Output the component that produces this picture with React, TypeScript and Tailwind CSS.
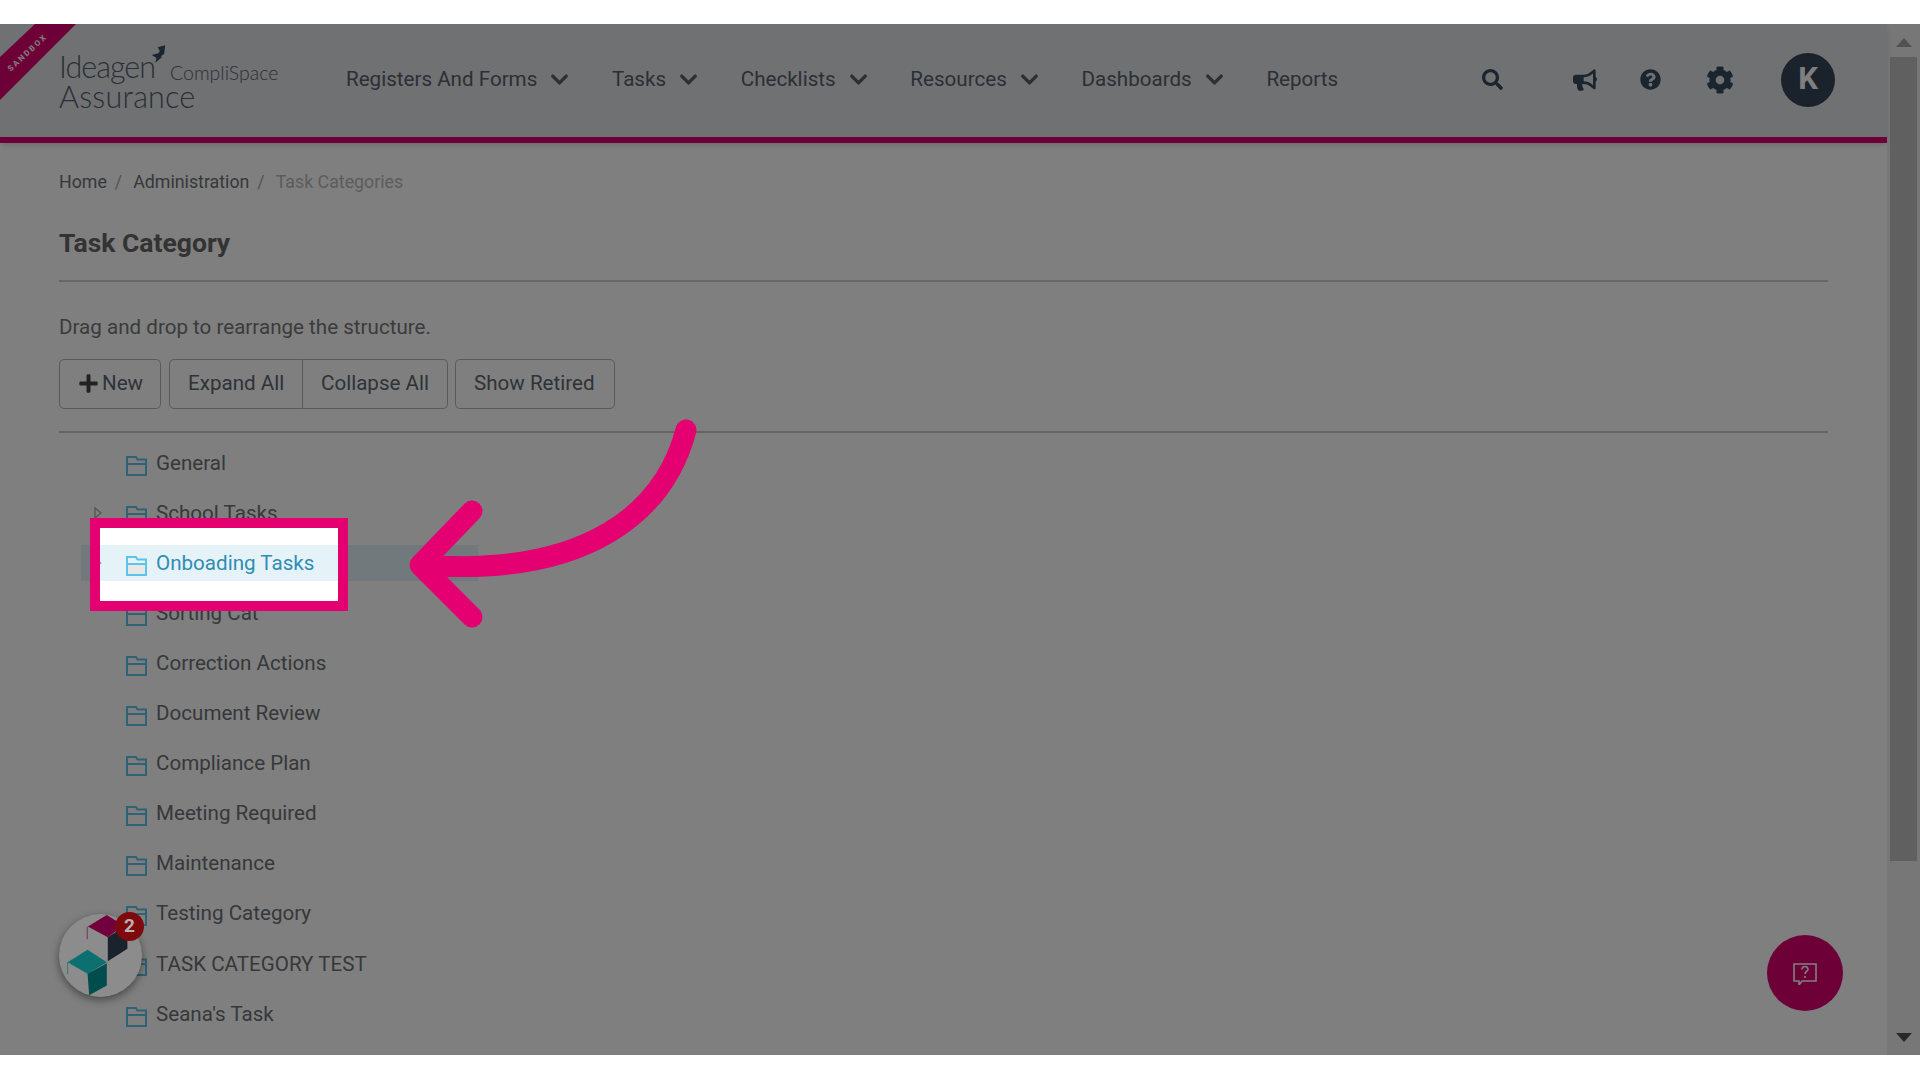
import { ChevronDown } from 'lucide-react';
import { FaBullhorn, FaCog, FaPlus, FaQuestionCircle, FaSearch } from 'react-icons/fa';

const NAV_ITEMS = ['Registers And Forms', 'Tasks', 'Checklists', 'Resources', 'Dashboards'];

const CATEGORIES = [
  'General',
  'School Tasks',
  'Onboading Tasks',
  'Sorting Cat',
  'Correction Actions',
  'Document Review',
  'Compliance Plan',
  'Meeting Required',
  'Maintenance',
  'Testing Category',
  'TASK CATEGORY TEST',
  "Seana's Task",
];

function FolderIcon({ selected }: { selected?: boolean }) {
  return (
    <svg width="21" height="20" viewBox="0 0 21 20" fill="none" className="shrink-0 mt-[5px]">
      {selected && <rect x="1" y="8" width="19" height="11" fill="#e8e8e8" />}
      <path d="M1 1h9l1.5 2.5H20V19H1zM1 8h19" stroke="#5cc4e8" strokeWidth="2" />
    </svg>
  );
}

function Expander() {
  return (
    <svg width="8" height="12" viewBox="0 0 8 12" fill="none">
      <path d="M1 1l6 5-6 5z" stroke="#a9a9a9" strokeWidth="1.3" />
    </svg>
  );
}

function Logo() {
  return (
    <div className="w-[287px] shrink-0 mt-[4px] text-[#55606c] font-['Lato',sans-serif] font-light">
      <div className="relative flex items-baseline leading-[29px]">
        <span className="text-[30.5px] tracking-[-1px]">Ideagen</span>
        <svg width="17" height="20" viewBox="455 85 50 60" className="absolute left-[91px] top-[-8px]">
          <path d="M478 95l22-6-3 26-17 11-2-12 6-7zM460 118l22-6 8 13-20 16 4-14z" fill="#364a60" />
        </svg>
        <span className="text-[19.5px] ml-[15px] translate-y-[2px]">CompliSpace</span>
      </div>
      <div className="text-[30.5px] leading-[29px] mt-[-3px] tracking-[0.2px]">Assurance</div>
    </div>
  );
}

function Header() {
  return (
    <header className="relative flex items-center h-[119px] pl-[59px] pr-[52px] pb-[2px] bg-[#e0e2e4] border-b-[6px] border-[#dc0070] shadow-md">
      <div className="absolute left-0 top-0 w-[76px] h-[76px] bg-[#dc0070] [clip-path:polygon(35px_0,76px_0,0_76px,0_33px)]">
        <span className="absolute left-[28px] top-[29px] -translate-x-1/2 -translate-y-1/2 text-[8px] leading-[8px] font-bold tracking-[2px] whitespace-nowrap text-white rotate-[-43deg]">
          SANDBOX
        </span>
      </div>
      <Logo />
      <nav className="flex items-center gap-[38.7px] text-[20.6px] text-[#55606c]">
        {NAV_ITEMS.map((item) => (
          <div key={item} className="flex items-center gap-[9px]">
            <span>{item}</span>
            <ChevronDown size={27} strokeWidth={3} />
          </div>
        ))}
        <span>Reports</span>
      </nav>
      <div className="ml-auto flex items-center text-[#364a60]">
        <FaSearch size={21} />
        <FaBullhorn size={24} className="ml-[70px]" />
        <FaQuestionCircle size={21} className="ml-[43px]" />
        <FaCog size={28} className="ml-[45px]" />
        <div className="ml-[47px] flex items-center justify-center w-[54px] h-[54px] rounded-full bg-[#344456] text-white text-[31px] font-bold">
          K
        </div>
      </div>
    </header>
  );
}

function Toolbar() {
  const btn = 'h-[50px] pb-[1px] border border-[#b4b4b4] text-[20.6px] text-[#5c6670] flex items-center bg-white';
  return (
    <div className="flex mt-[17px]">
      <button className={`${btn} rounded-[5px] w-[102px] pl-[18px]`}>
        <FaPlus size={21} className="mr-[3px] text-[#444]" />
        New
      </button>
      <button className={`${btn} rounded-l-[5px] ml-[8px] w-[134px] pl-[18px]`}>Expand All</button>
      <button className={`${btn} rounded-r-[5px] border-l-0 w-[145px] pl-[18px]`}>Collapse All</button>
      <button className={`${btn} rounded-[5px] ml-[7px] w-[160px] pl-[18px]`}>Show Retired</button>
    </div>
  );
}

function CategoryRow({ name }: { name: string }) {
  const selected = name === 'Onboading Tasks';
  return (
    <div className="h-[50.1px] flex items-center">
      <div className={`flex items-center ml-[22px] w-[397px] h-[36px] pl-[13px] ${selected ? 'bg-[#e5f3f9] text-[#2f8db3]' : 'text-[#6c7075]'}`}>
        <div className="w-[32px] shrink-0">{(name === 'School Tasks' || selected) && <Expander />}</div>
        <FolderIcon selected={selected} />
        <span className="ml-[9px] text-[20.6px]">{name}</span>
      </div>
    </div>
  );
}

function Scrollbar() {
  return (
    <div className="w-[33px] shrink-0 bg-[#eeeeee] flex flex-col items-center">
      <svg width="16" height="9" viewBox="0 0 16 9" className="mt-[14px]">
        <path d="M8 0l8 9H0z" fill="#a3a3a3" />
      </svg>
      <div className="w-[27px] h-[804px] mt-[10px] bg-[#c1c1c1]" />
      <svg width="16" height="9" viewBox="0 0 16 9" className="mt-auto mb-[13px]">
        <path d="M8 9L0 0h16z" fill="#505050" />
      </svg>
    </div>
  );
}

function Widget() {
  return (
    <div className="absolute left-[59px] bottom-[58px] z-20 w-[83px] h-[83px] rounded-full bg-[#8c8c8c] shadow-[0_3px_8px_rgba(0,0,0,0.45)]">
      <svg width="83" height="83" viewBox="57 70 248 250">
        <path d="M143 108l57-35 50 32-47 35z" fill="#71003c" />
        <path d="M203 140l47-30 12 5v60l-59 37z" fill="#1a222b" />
        <path d="M141 108v38" stroke="#71003c" strokeWidth="2" />
        <path d="M82 215l60-37 58 37-58 35z" fill="#0d6f70" />
        <path d="M142 250l58-32v67l-53 30z" fill="#004d4e" />
        <path d="M82 215v36" stroke="#0d6f70" strokeWidth="2" />
      </svg>
      <div className="absolute right-[-2px] top-[-2px] w-[29px] h-[29px] rounded-full bg-[#7e0a0d] flex items-center justify-center text-[19px] font-bold text-[#b5b5b5]">
        2
      </div>
    </div>
  );
}

function ChatButton() {
  return (
    <div className="absolute right-[77px] bottom-[44px] w-[76px] h-[76px] rounded-full bg-[#dc0070] flex items-center justify-center">
      <svg width="24" height="24" viewBox="0 0 24 24" fill="none" stroke="#ffffff" strokeWidth="1.6">
        <path d="M1 3h22v17H9l-3 4v-4H1z" />
        <path d="M9 8.5c0-4 6-4 6 0 0 2-3 2-3 4.5M12 15v2" />
      </svg>
    </div>
  );
}

export default function App() {
  return (
    <div className="w-[1920px] h-[1080px] bg-white pt-[24px] font-['Roboto',sans-serif] overflow-hidden">
      <div className="relative flex h-[1031px] overflow-hidden bg-white">
        <div className="flex-1 min-w-0">
          <Header />
          <main className="px-[59px] pt-[24px]">
            <div className="flex text-[17.8px] leading-[30px]">
              <span className="text-[#6c7075]">Home</span>
              <span className="text-[#a8a8a8] ml-[8px] mr-[11px]">/</span>
              <span className="text-[#6c7075]">Administration</span>
              <span className="text-[#a8a8a8] ml-[8px] mr-[11px]">/</span>
              <span className="text-[#b8b8b8]">Task Categories</span>
            </div>
            <h1 className="mt-[28px] text-[26.5px] leading-[36px] font-bold text-[#666]">Task Category</h1>
            <div className="mt-[19px] h-[2px] bg-[#cfcfcf]" />
            <p className="mt-[30px] text-[20.6px] leading-[30px] text-[#777]">Drag and drop to rearrange the structure.</p>
            <Toolbar />
            <div className="mt-[22px] h-[2px] bg-[#c8c8c8]" />
            <div className="mt-[5px]">
              {CATEGORIES.map((name) => (
                <CategoryRow key={name} name={name} />
              ))}
            </div>
          </main>
          <ChatButton />
        </div>
        <Scrollbar />
        <Widget />

        {/* dim layer with the highlighted row cut out */}
        <div className="absolute left-[90px] top-[494px] w-[258px] h-[93px] z-10 border-[10px] border-[#e50072] shadow-[0_0_0_3000px_rgba(0,0,0,0.5)]" />
        <svg width="1920" height="1031" viewBox="0 24 1920 1031" fill="none" className="absolute left-0 top-0 z-10 pointer-events-none">
          <path
            d="M686 430C665 510 590 578 421 565M472 511L420 565L472 617"
            stroke="#e50072"
            strokeWidth="21"
            strokeLinecap="round"
            strokeLinejoin="round"
          />
        </svg>
      </div>
    </div>
  );
}
